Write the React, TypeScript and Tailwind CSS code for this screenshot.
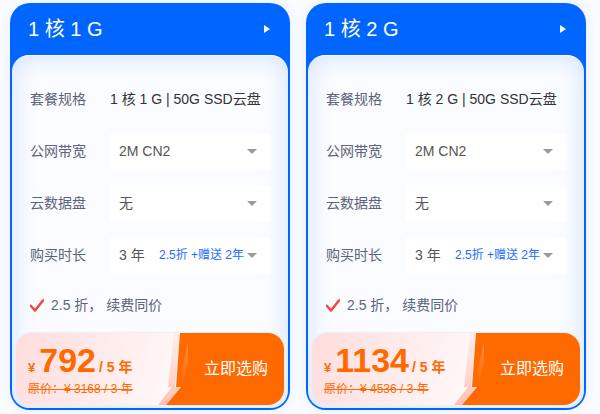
import React from "react";

const font = { fontFamily: '"Liberation Sans", "Noto Sans CJK SC", sans-serif' };

type Plan = { title: string; spec: string; price: string; old: string };

const plans: Plan[] = [
  { title: "1 核 1 G", spec: "1 核 1 G | 50G SSD云盘", price: "792", old: "3168" },
  { title: "1 核 2 G", spec: "1 核 2 G | 50G SSD云盘", price: "1134", old: "4536" },
];

const Caret: React.FC<{ className?: string }> = ({ className = "" }) => (
  <span
    className={`block w-0 h-0 border-x-[5px] border-x-transparent border-t-[5px] border-t-[#9a9a9a] shrink-0 ${className}`}
  />
);

const Row: React.FC<{ label: string; children: React.ReactNode }> = ({ label, children }) => (
  <div className="flex items-center h-9">
    <div className="w-20 shrink-0 text-[14px] text-[#5b6478]">{label}</div>
    {children}
  </div>
);

const Select: React.FC<{ children: React.ReactNode }> = ({ children }) => (
  <div className="w-40 h-9 bg-white flex items-center pl-[9px] pr-[13px] text-[14px] text-[#555]">
    {children}
  </div>
);

const PlanCard: React.FC<{ plan: Plan }> = ({ plan }) => (
  <div className="w-[280px] h-[407px] rounded-[20px] bg-[#0066ff] px-[2px] pb-[2px] flex flex-col shadow-[0_0_12px_rgba(0,90,220,0.08)]">
    <div className="h-[52px] shrink-0 flex items-center justify-between pl-4 pr-[18px] text-white text-[20px]">
      <span>{plan.title}</span>
      <span className="w-0 h-0 border-y-[4px] border-y-transparent border-l-[6px] border-l-white" />
    </div>
    <div className="flex-1 rounded-[17px] border-t-[1.5px] border-white bg-[#fbfcff] shadow-[inset_0_0_26px_rgba(40,120,255,0.2)] flex flex-col overflow-hidden">
      <div className="pt-[25px] px-[18px] flex flex-col gap-4">
        <Row label="套餐规格">
          <span className="text-[14px] text-[#333]">{plan.spec}</span>
        </Row>
        <Row label="公网带宽">
          <Select>
            <span>2M CN2</span>
            <Caret className="ml-auto" />
          </Select>
        </Row>
        <Row label="云数据盘">
          <Select>
            <span>无</span>
            <Caret className="ml-auto" />
          </Select>
        </Row>
        <Row label="购买时长">
          <Select>
            <span>3 年</span>
            <span className="ml-auto text-[12px] text-[#1a6dff]">2.5折 +赠送 2年</span>
            <Caret className="ml-[3px]" />
          </Select>
        </Row>
      </div>
      <div className="mt-[22px] h-5 px-[18px] flex items-center gap-[7px] text-[14px] text-[#5c6580]">
        <svg width="14" height="13" viewBox="0 0 14 13">
          <path d="M1 7 L5 11.5 L13 1.5" fill="none" stroke="#ef4a3c" strokeWidth="2.6" strokeLinecap="round" strokeLinejoin="round" />
        </svg>
        <span>2.5 折， 续费同价</span>
      </div>
      <div className="mt-[18px] mx-[4px] mb-[2px] h-[72px] relative rounded-[16px] overflow-hidden flex shadow-[0_-1px_2px_rgba(0,0,0,0.06)] bg-[linear-gradient(110deg,#ffdcdc_0%,#fff1f1_45%,#ffffff_75%)]">
        <div className="flex-1 pl-[12px] pt-[10px] text-[#ff6a00] font-bold">
          <div className="flex items-baseline h-[34px]">
            <span className="text-[13px] mr-[4px]">¥</span>
            <span className="text-[34px] leading-none">{plan.price}</span>
            <span className="text-[14px] ml-[3px]">/ 5 年</span>
          </div>
          <div className="mt-[6px] text-[12px] font-normal line-through leading-none">原价：¥ {plan.old} / 3 年</div>
        </div>
        <div className="w-24 shrink-0 bg-[#ff6a00] flex items-center justify-center text-white text-[16px]">
          立即选购
        </div>
        <svg className="absolute left-[132px] top-0" width="40" height="72" viewBox="0 0 40 72">
          <defs>
            <linearGradient id="pale" x1="0" y1="0" x2="0" y2="1">
              <stop offset="0" stopColor="#ffd6cf" stopOpacity="0.3" />
              <stop offset="1" stopColor="#ffb8ac" stopOpacity="0.9" />
            </linearGradient>
            <linearGradient id="shine" x1="0" y1="0" x2="0" y2="1">
              <stop offset="0" stopColor="#ffb080" stopOpacity="0.9" />
              <stop offset="1" stopColor="#ff8a40" stopOpacity="0" />
            </linearGradient>
          </defs>
          <polygon points="26,0 32,0 27,54 33,54 18,72 10,72 24,54 20,54" fill="url(#pale)" />
          <polygon points="32,0 40,0 40,72 18,72 33,54 28,54" fill="#ff6a00" />
          <polygon points="42,0 49,0 34,52 31,52" fill="url(#shine)" />
        </svg>
      </div>
    </div>
  </div>
);

export default function App() {
  return (
    <div style={font} className="w-[600px] h-[414px] bg-[#f9fbff] pt-[3px] pl-[10px] flex gap-4">
      {plans.map((p) => (
        <PlanCard key={p.title} plan={p} />
      ))}
    </div>
  );
}
